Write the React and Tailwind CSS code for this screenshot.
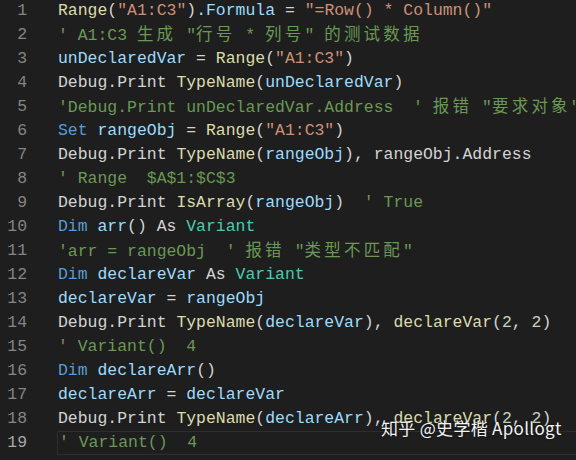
import React from "react";

// Dark+ Farben wie im Editor
const C = {
  fn: "text-[#DCDCAA]",
  str: "text-[#CE9178]",
  v: "text-[#9CDCFE]",
  p: "text-[#D4D4D4]",
  c: "text-[#6A9955]",
  kw: "text-[#569CD6]",
  t: "text-[#4EC9B0]",
  n: "text-[#C5D4BC]",
};

const lines = [
  [["Range", "fn"], ["(", "p"], ['"A1:C3"', "str"], [")", "p"], [".Formula", "v"], [" = ", "p"], ['"=Row() * Column()"', "str"]],
  [["' A1:C3 生成 \"行号 * 列号\" 的测试数据", "c"]],
  [["unDeclaredVar", "v"], [" = ", "p"], ["Range", "fn"], ["(", "p"], ['"A1:C3"', "str"], [")", "p"]],
  [["Debug.Print ", "p"], ["TypeName", "fn"], ["(", "p"], ["unDeclaredVar", "v"], [")", "p"]],
  [["'Debug.Print unDeclaredVar.Address  ' 报错 \"要求对象\"", "c"]],
  [["Set ", "kw"], ["rangeObj", "v"], [" = ", "p"], ["Range", "fn"], ["(", "p"], ['"A1:C3"', "str"], [")", "p"]],
  [["Debug.Print ", "p"], ["TypeName", "fn"], ["(", "p"], ["rangeObj", "v"], ["), rangeObj.Address", "p"]],
  [["' Range  $A$1:$C$3", "c"]],
  [["Debug.Print ", "p"], ["IsArray", "fn"], ["(", "p"], ["rangeObj", "v"], [")  ", "p"], ["' True", "c"]],
  [["Dim ", "kw"], ["arr", "v"], ["() As ", "p"], ["Variant", "t"]],
  [["'arr = rangeObj  ' 报错 \"类型不匹配\"", "c"]],
  [["Dim ", "kw"], ["declareVar", "v"], [" As ", "p"], ["Variant", "t"]],
  [["declareVar", "v"], [" = ", "p"], ["rangeObj", "v"]],
  [["Debug.Print ", "p"], ["TypeName", "fn"], ["(", "p"], ["declareVar", "v"], ["), ", "p"], ["declareVar", "fn"], ["(", "p"], ["2", "n"], [", ", "p"], ["2", "n"], [")", "p"]],
  [["' Variant()  4", "c"]],
  [["Dim ", "kw"], ["declareArr", "v"], ["()", "p"]],
  [["declareArr", "v"], [" = ", "p"], ["declareVar", "v"]],
  [["Debug.Print ", "p"], ["TypeName", "fn"], ["(", "p"], ["declareArr", "v"], ["), ", "p"], ["declareVar", "fn"], ["(", "p"], ["2", "n"], [", ", "p"], ["2", "n"], [")", "p"]],
  [["' Variant()  4", "c"]],
];

// CJK-Zeichen doppelt breit wie im Monospace-Editor
const splitCjk = (text) => {
  const parts = [];
  let buf = "";
  let cjk = false;
  for (const ch of text) {
    const isCjk = /[\u4e00-\u9fff]/.test(ch);
    if (isCjk !== cjk && buf) {
      parts.push([buf, cjk]);
      buf = "";
    }
    cjk = isCjk;
    buf += ch;
  }
  if (buf) parts.push([buf, cjk]);
  return parts;
};

const Token = ({ text, kind }) => (
  <span className={C[kind]}>
    {splitCjk(text).map(([t, isCjk], i) =>
      isCjk ? (
        <span key={i} className="font-['Noto_Sans_CJK_SC',sans-serif] text-[16.5px] tracking-[3.2px]">
          {t}
        </span>
      ) : (
        <span key={i}>{t}</span>
      )
    )}
  </span>
);

const App = () => {
  return (
    <div className="relative w-[576px] h-[460px] overflow-hidden bg-[#1e1e1e] font-['Liberation_Mono',monospace] text-[16.45px]">
      <div className="flex flex-col -mt-px">
        {lines.map((tokens, idx) => {
          const active = idx === lines.length - 1;
          return (
            <div key={idx} className="flex h-6 items-center">
              <div className={`w-[27px] shrink-0 text-right ${active ? "text-[#a8a8a8]" : "text-[#858585]"}`}>
                {idx + 1}
              </div>
              <div
                className={`ml-[30px] flex h-6 flex-1 items-center whitespace-pre pl-px ${
                  active ? "border border-[#2e2e2e] border-r-0" : ""
                }`}
              >
                {tokens.map(([text, kind], i) => (
                  <Token key={i} text={text} kind={kind} />
                ))}
              </div>
            </div>
          );
        })}
      </div>
      {/* Wasserzeichen liegt über dem Code */}
      <div className="absolute left-[381px] top-[416px] whitespace-nowrap font-['Noto_Sans_CJK_SC',sans-serif] text-[17px] leading-6 tracking-[0.3px] text-[#f2f2f2] [text-shadow:0_0_3px_rgba(0,0,0,0.6)]">
        知乎 @史学楷 Apollogt
      </div>
    </div>
  );
};

export default App;
